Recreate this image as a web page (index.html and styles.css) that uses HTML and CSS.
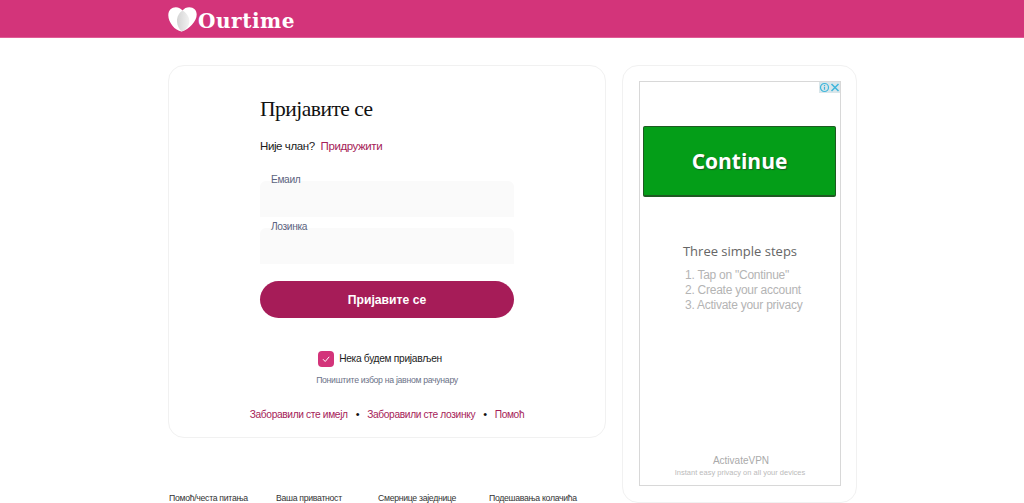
FILE: index.html
```html
<!DOCTYPE html>
<html lang="sr">
<head>
  <meta charset="UTF-8" />
  <meta name="viewport" content="width=device-width, initial-scale=1.0" />
  <title>Ourtime</title>
  <link rel="stylesheet" href="styles.css">
</head>

<body>

  <header class="topbar">
    <div class="topbar-inner">
      <svg class="logo-heart" width="29" height="25" viewBox="0 0 29 25">
        <defs>
          <linearGradient id="lens" x1="0" y1="0" x2="1" y2="0">
            <stop offset="0" stop-color="#d4d4d4" />
            <stop offset="1" stop-color="#f2f2f2" />
          </linearGradient>
        </defs>
        <path fill="#fff" d="M13.500 24.500C7 23.500.3 15.500.3 8.200.3 3.300 3.700.3 7.800.3c2.900 0 5.200 1.300 6.700 3.300C16 1.500 18.500.3 21.300.3c4.400 0 7.400 3 7.400 7.300 0 6.900-7.600 14.900-15.200 16.900z" />
        <path fill="url(#lens)" d="M14.500 3.600C11 6 8.800 10 9 14.500c.2 4 2 7.500 4.500 10 4-1 7-4.500 7.800-9 .7-4.500-2.300-9.500-6.800-11.900z" />
      </svg>
      <span class="logo-text">Ourtime</span>
    </div>
  </header>

  <div class="page">
    <main class="left-col">
      <section class="card login-card">
        <div class="login-form">
          <h1>Пријавите се</h1>
          <p class="join-line">Није члан? <a href="#">Придружити</a></p>

          <div class="field">
            <label>Емаил</label>
            <input type="text" />
          </div>
          <div class="field">
            <label>Лозинка</label>
            <input type="password" />
          </div>

          <button class="login-btn">Пријавите се</button>

          <div class="remember">
            <span class="checkbox">
              <svg width="10" height="10" viewBox="0 0 10 10">
                <path d="M2 5.200 4.200 7.500 8.200 2.800" fill="none" stroke="#fff" stroke-width="1" />
              </svg>
            </span>
            <span>Нека будем пријављен</span>
          </div>
          <p class="remember-hint">Поништите избор на јавном рачунару</p>
        </div>

        <div class="help-links">
          <a href="#">Заборавили сте имејл</a>
          <span class="dot">•</span>
          <a href="#">Заборавили сте лозинку</a>
          <span class="dot">•</span>
          <a href="#">Помоћ</a>
        </div>
      </section>

      <footer class="footer-links">
        <a href="#">Помоћ/честа питања</a>
        <a href="#">Ваша приватност</a>
        <a href="#">Смернице заједнице</a>
        <a href="#">Подешавања колачића</a>
      </footer>
    </main>

    <aside class="card ad-card">
      <div class="ad">
        <div class="ad-badge">
          <svg width="11" height="11" viewBox="0 0 11 11">
            <circle cx="5.500" cy="5.500" r="4" fill="none" stroke="#3fb6dc" stroke-width="1.200" />
            <path d="M5.500 4.800v3M5.500 3v1" stroke="#3fb6dc" stroke-width="1.200" />
          </svg>
          <svg width="10" height="11" viewBox="0 0 10 11">
            <path d="M1.500 2 8.500 9M8.500 2 1.500 9" stroke="#3fb6dc" stroke-width="1.500" />
          </svg>
        </div>
        <div class="ad-continue">Continue</div>
        <h3>Three simple steps</h3>
        <ol class="ad-steps">
          <li>1. Tap on "Continue"</li>
          <li>2. Create your account</li>
          <li>3. Activate your privacy</li>
        </ol>
        <div class="ad-brand">ActivateVPN</div>
        <div class="ad-tagline">Instant easy privacy on all your devices</div>
      </div>
    </aside>
  </div>

</body>
</html>
```

FILE: styles.css
```css
body {
  margin: 0;
  padding: 0;
  background: #fff;
  font-family: 'Liberation Sans', Arial, sans-serif;
  color: #1a1a1a;
  overflow: hidden;
  height: 503px;
}

a {
  text-decoration: none;
}

.topbar {
  height: 37px;
  background: #d3347a;
  border-bottom: 1px solid #e05c96;
}

.topbar-inner {
  width: 689px;
  margin-left: 168px;
  display: flex;
  align-items: flex-start;
}

.logo-heart {
  margin-top: 7px;
  flex-shrink: 0;
}

.logo-text {
  margin-left: 1px;
  margin-top: 7px;
  font-family: 'DejaVu Serif', serif;
  font-weight: bold;
  font-size: 20px;
  letter-spacing: 0.55px;
  line-height: 28px;
  color: #fff;
}

.page {
  width: 689px;
  margin: 27px 0 0 168px;
  display: flex;
  gap: 16px;
  align-items: flex-start;
}

.card {
  box-sizing: border-box;
  background: #fff;
  border: 1px solid #f1f1f1;
  border-radius: 16px;
}

.left-col {
  width: 438px;
}

.login-card {
  height: 373px;
  padding-top: 30px;
}

.login-form {
  width: 254px;
  margin-left: 91px;
}

.login-form h1 {
  margin: 0;
  font-family: 'Liberation Serif', serif;
  font-weight: normal;
  font-size: 21.500px;
  letter-spacing: -0.5px;
  line-height: 26px;
  color: #111;
}

.join-line {
  margin: 17px 0 0;
  font-size: 11.500px;
  letter-spacing: -0.4px;
  line-height: 14px;
}

.join-line a {
  margin-left: 3px;
  color: #a61c58;
}

.field {
  position: relative;
  margin-top: 11px;
}

.join-line + .field {
  margin-top: 28px;
}

.field label {
  position: absolute;
  left: 11px;
  top: -7px;
  font-size: 10.200px;
  letter-spacing: -0.35px;
  line-height: 12px;
  color: #5c6480;
}

.field input {
  display: block;
  box-sizing: border-box;
  width: 254px;
  height: 36px;
  border: none;
  border-radius: 6px 6px 0 0;
  background: #fafafa;
}

.login-btn {
  display: block;
  width: 254px;
  height: 37px;
  margin-top: 17px;
  border: none;
  border-radius: 19px;
  background: #a61c58;
  color: #fff;
  font-family: inherit;
  font-weight: bold;
  font-size: 12.200px;
}

.remember {
  margin-top: 33px;
  padding-right: 14px;
  display: flex;
  justify-content: center;
  align-items: center;
  gap: 5px;
  font-size: 10.200px;
  letter-spacing: -0.3px;
  line-height: 14px;
  color: #222;
}

.checkbox {
  width: 16px;
  height: 16px;
  border-radius: 4px;
  background: #d3347a;
  display: flex;
  justify-content: center;
  align-items: center;
}

.remember-hint {
  margin: 8px 0 0;
  text-align: center;
  font-size: 8.700px;
  letter-spacing: -0.3px;
  line-height: 11px;
  color: #6b7288;
}

.help-links {
  margin-top: 22px;
  display: flex;
  justify-content: center;
  gap: 8px;
  font-size: 10.200px;
  letter-spacing: -0.35px;
  line-height: 13px;
}

.help-links a {
  color: #a61c58;
}

.dot {
  font-size: 11px;
  color: #111;
}

.footer-links {
  margin-top: 55px;
  display: flex;
  font-size: 8.700px;
  letter-spacing: -0.3px;
  line-height: 11px;
}

.footer-links a {
  color: #333;
}

.footer-links a:nth-child(1) {
  margin-left: 1px;
  width: 107px;
}

.footer-links a:nth-child(2) {
  width: 102px;
}

.footer-links a:nth-child(3) {
  width: 111px;
}

.ad-card {
  width: 235px;
  height: 438px;
  padding: 15px 15px 0 16px;
}

.ad {
  position: relative;
  box-sizing: border-box;
  width: 202px;
  height: 405px;
  border: 1px solid #d8d8d8;
  padding-top: 44px;
  text-align: center;
}

.ad-badge {
  position: absolute;
  top: 0;
  right: 0;
  display: flex;
  align-items: center;
  height: 11px;
  background: #d9e6ea;
}

.ad-continue {
  box-sizing: border-box;
  width: 193px;
  height: 71px;
  margin-left: 3px;
  background: #049e18;
  border: 1px solid #1e5a22;
  border-bottom-width: 2px;
  border-radius: 2px;
  color: #fff;
  font-family: 'Open Sans', sans-serif;
  font-weight: bold;
  font-size: 21px;
  line-height: 68px;
  text-shadow: 1px 1px 1px #1c5a20;
}

.ad h3 {
  margin: 45px 0 0;
  font-family: 'Open Sans', sans-serif;
  font-weight: normal;
  font-size: 13px;
  line-height: 18px;
  color: #666;
}

.ad-steps {
  list-style: none;
  margin: 8px 0 0 45px;
  padding: 0;
  text-align: left;
  font-size: 12px;
  letter-spacing: -0.25px;
  line-height: 15px;
  color: #b4b4b4;
}

.ad-brand {
  margin-top: 141px;
  padding-left: 2px;
  font-size: 10px;
  line-height: 13px;
  color: #aaa;
}

.ad-tagline {
  margin-top: 1px;
  font-size: 7.500px;
  line-height: 10px;
  color: #bbb;
}
```
